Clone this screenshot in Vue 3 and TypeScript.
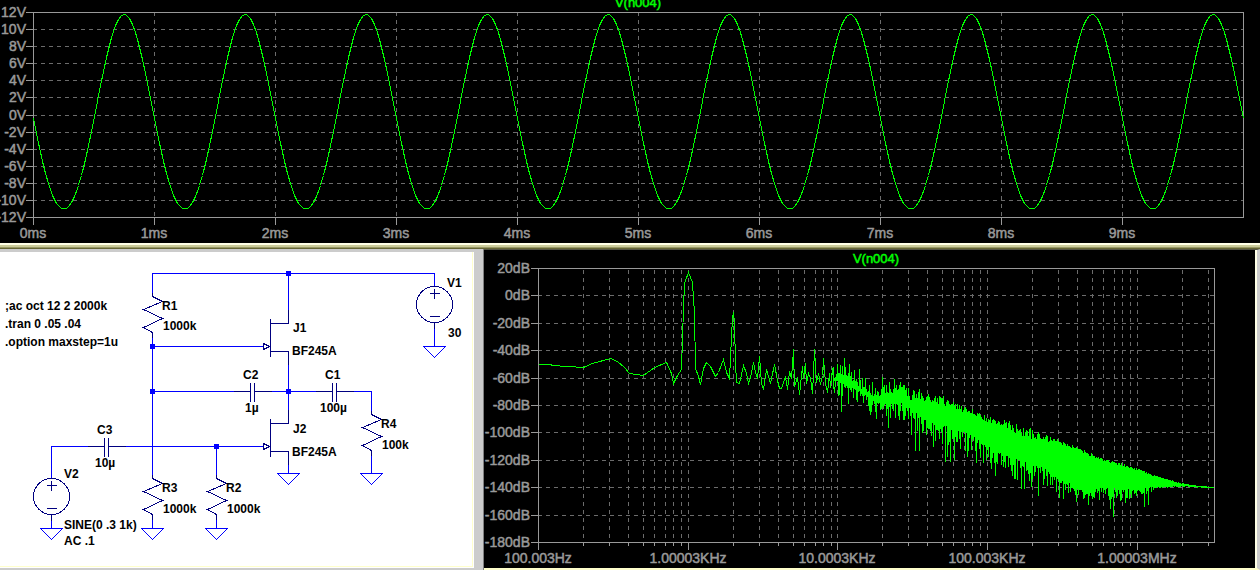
<script setup lang="ts">
interface Label { x: number; y: number; text: string }
type Point = [number, number]

// ---- Transient plot ----
const voltRows = [12, 29, 46, 63, 80, 97, 115, 132, 149, 166, 183, 200, 217]
  .map((y, i) => ({ y, text: `${12 - i * 2}V` }))
const msColumns = Array.from({ length: 10 }, (_, i) => ({ x: 33 + i * 121, text: `${i}ms` }))

const wave = Array.from({ length: 1211 }, (_, i) => {
  const w = (i / 121) * 2 * Math.PI
  const volts = -0.04 - 11.375 * Math.sin(w) - 0.41 * Math.cos(2 * w)
  return `${33 + i},${Math.round(114.5 - volts * 8.54)}`
}).join(' ')

// ---- Spectrum plot ----
const dbRows = [268, 295, 323, 350, 378, 405, 432, 460, 487, 515, 542]
  .map((y, i) => ({ y, text: `${20 - i * 20}dB` }))
const decades: { x: number; text: string }[] = [
  { x: 538, text: '100.003Hz' },
  { x: 688, text: '1.00003KHz' },
  { x: 837, text: '10.0003KHz' },
  { x: 987, text: '100.003KHz' },
  { x: 1137, text: '1.00003MHz' },
]
const minorColumns: number[] = []
for (const d of decades) {
  for (let n = 2; n < 10; n++) {
    const x = Math.round(d.x + 149.7 * Math.log10(n))
    if (x < 1212) minorColumns.push(x)
  }
}

const spectrumLine: Point[] = [
  [538, 364], [551, 364], [551, 365], [568, 366], [583, 367], [592, 363], [610, 358], [617, 361],
  [624, 367], [629, 373], [643, 375], [654, 367], [666, 362], [671, 373], [673, 383], [677, 375],
  [681, 369], [683, 307], [684, 283], [688, 272], [692, 282], [694, 313], [695, 368], [698, 376],
  [700, 384], [703, 368], [706, 362], [710, 366], [715, 376], [718, 372], [723, 359], [726, 372],
  [729, 378], [731, 337], [732, 317], [733, 312], [734, 323], [735, 363], [736, 382], [739, 383],
  [743, 365], [746, 373], [748, 383], [750, 377], [753, 362], [755, 372], [757, 378], [759, 356],
  [761, 383], [763, 389], [766, 369], [770, 383], [774, 364], [777, 380], [779, 388], [781, 388],
  [785, 376], [787, 389], [789, 371], [791, 378], [793, 349], [794, 386], [797, 377], [799, 394],
  [802, 366], [803, 378], [805, 363], [806, 383], [808, 373], [810, 378], [812, 393], [813, 373],
  [814, 349], [816, 382], [818, 373], [820, 384], [822, 375], [823, 358], [825, 383], [827, 392],
  [829, 373], [830, 387], [832, 368], [834, 393],
]
const spectrumPoints = spectrumLine.map(p => p.join(',')).join(' ')

// x, highest top, lowest top, highest bottom, lowest bottom of the noise band
const envelope: number[][] = [
  [833, 366, 380, 378, 396], [843, 362, 376, 383, 398], [860, 372, 388, 391, 404],
  [872, 384, 396, 399, 414], [880, 386, 398, 404, 420], [888, 382, 394, 404, 422],
  [896, 380, 392, 401, 418], [905, 386, 398, 404, 422], [915, 391, 402, 412, 430],
  [925, 392, 401, 420, 436], [940, 396, 405, 422, 444], [950, 400, 409, 426, 450],
  [970, 407, 414, 434, 454], [990, 417, 424, 448, 468], [1003, 418, 426, 453, 473],
  [1020, 426, 438, 460, 482], [1045, 434, 442, 468, 487], [1060, 440, 444, 480, 494],
  [1080, 448, 453, 487, 499], [1100, 456, 460, 487, 500], [1120, 463, 466, 488, 502],
  [1137, 468, 471, 490, 497], [1150, 474, 475, 487, 493], [1160, 477, 478, 487, 488],
  [1182, 483, 484, 486, 487], [1200, 486, 486, 487, 488], [1214, 487, 487, 488, 488],
]
const dips: Record<number, number> = {
  841: 412, 848: 404, 870: 415, 876: 419, 888: 428, 899: 420, 911: 435, 915: 451, 919: 451,
  933: 447, 945: 462, 947: 457, 950: 462, 954: 460, 967: 457, 976: 463, 983: 463, 991: 469,
  995: 476, 1014: 479, 1021: 489, 1024: 489, 1031: 487, 1038: 496, 1059: 498, 1063: 499,
  1076: 502, 1088: 505, 1099: 500, 1110: 509, 1113: 517, 1125: 503, 1144: 507, 1148: 505,
}
const peaks: Record<number, number> = {
  837: 364, 840: 365, 844: 358, 849: 364, 854: 370, 859: 369, 872: 382, 882: 377, 889: 382,
  894: 379, 900: 382, 913: 390, 919: 389, 935: 396, 943: 396, 953: 402, 1012: 425, 1030: 428,
}

let seed = 4711
function random(): number {
  seed = (seed * 16807) % 2147483647
  return seed / 2147483647
}
function bandAt(x: number): number[] {
  const i = Math.max(1, envelope.findIndex(e => e[0] >= x))
  const a = envelope[i - 1]
  const b = envelope[i]
  const t = (x - a[0]) / (b[0] - a[0])
  return a.map((v, k) => v + (b[k] - v) * t)
}
let noise = ''
for (let x = 833; x < 1214; x++) {
  const [, t0, t1, b0, b1] = bandAt(x)
  const sparse = x < 900 && x % 3 === 0
  const topRandom = sparse ? 0.7 + 0.3 * random() : random()
  const bottomRandom = sparse ? 0.2 * random() : Math.pow(random(), 1.2)
  const top = peaks[x] ?? Math.round(t0 + (t1 - t0) * topRandom)
  const bottom = dips[x] ?? Math.round(b0 + (b1 - b0) * bottomRandom)
  noise += `M${x + 0.5} ${Math.min(top, bottom - 1)}V${Math.max(bottom, top + 1)}`
}

// ---- Schematic ----
const resistor = (x: number, y: number) =>
  `M${x} ${y - 4}V${y}L${x + 10} ${y + 5}L${x - 9} ${y + 13}L${x + 10} ${y + 22}L${x - 9} ${y + 31}L${x} ${y + 36}V${y + 41}`
const ground = (x: number, y: number) => `M${x - 11} ${y}H${x + 11}L${x} ${y + 11}Z`
const capacitor = (x: number, y: number) =>
  `M${x - 17} ${y}H${x}M${x} ${y - 9}V${y + 10}M${x + 4} ${y - 9}V${y + 10}M${x + 4} ${y}H${x + 21}`
const jfet = (x: number, y: number) =>
  `M${x + 18} ${y - 37}V${y - 23}H${x}M${x} ${y - 28}V${y + 10}M${x} ${y + 5}H${x + 18}V${y + 18}M${x - 7} ${y - 3}V${y + 3}L${x - 1} ${y}Z`
const source = (x: number, y: number) =>
  `M${x - 5} ${y - 11}H${x + 5}M${x} ${y - 16}V${y - 6}M${x - 5} ${y + 12}H${x + 5}M${x} ${y + 18}V${y + 24}`

const wires = [
  'M152 292V273H434V286', 'M152 336V475', 'M152 346H263', 'M288 273V310', 'M288 364V410',
  'M152 391H234', 'M271 391H316', 'M353 391H371V411', 'M371 455V473', 'M288 464V473',
  'M51 478V446H88', 'M125 446H263', 'M216 446V475', 'M434 328V346', 'M51 520V528',
  'M152 519V528', 'M216 519V528',
].join('')
const grounds = [
  ground(434, 346), ground(371, 473), ground(288, 473), ground(51, 528), ground(152, 528), ground(216, 528),
].join('')
const parts = [
  resistor(152, 296), resistor(152, 478), resistor(216, 478), resistor(371, 414),
  capacitor(250, 391), capacitor(332, 391), capacitor(104, 446),
  jfet(270, 346), jfet(270, 446), source(434, 304), source(51, 496),
].join('')
const sources: Point[] = [[434, 304], [51, 496]]
const nodes: Point[] = [[288, 273], [152, 346], [152, 391], [288, 391], [216, 446]]
const labels: Label[] = [
  { x: 5, y: 310, text: ';ac oct 12 2 2000k' },
  { x: 5, y: 328, text: '.tran 0 .05 .04' },
  { x: 5, y: 346, text: '.option maxstep=1u' },
  { x: 162, y: 310, text: 'R1' }, { x: 163, y: 330, text: '1000k' },
  { x: 293, y: 332, text: 'J1' }, { x: 292, y: 355, text: 'BF245A' },
  { x: 447, y: 287, text: 'V1' }, { x: 448, y: 337, text: '30' },
  { x: 243, y: 379, text: 'C2' }, { x: 245, y: 412, text: '1µ' },
  { x: 325, y: 379, text: 'C1' }, { x: 320, y: 412, text: '100µ' },
  { x: 381, y: 428, text: 'R4' }, { x: 382, y: 449, text: '100k' },
  { x: 293, y: 433, text: 'J2' }, { x: 292, y: 456, text: 'BF245A' },
  { x: 97, y: 434, text: 'C3' }, { x: 95, y: 467, text: '10µ' },
  { x: 64, y: 478, text: 'V2' }, { x: 64, y: 529, text: 'SINE(0 .3 1k)' }, { x: 64, y: 545, text: 'AC .1' },
  { x: 162, y: 492, text: 'R3' }, { x: 163, y: 513, text: '1000k' },
  { x: 226, y: 492, text: 'R2' }, { x: 227, y: 513, text: '1000k' },
]
</script>

<template>
  <main class="workspace">
    <section class="transient">
      <svg class="plot" viewBox="0 0 1260 243" role="img" aria-label="V(n004) over time">
        <g class="grid">
          <path v-for="r in voltRows.slice(1, -1)" :key="r.y" :d="`M33 ${r.y + 0.5}H1243`" />
          <path v-for="c in msColumns.slice(1)" :key="c.x" :d="`M${c.x + 0.5} 12V217`" />
        </g>
        <g class="axis">
          <rect x="33.5" y="12.5" width="1210" height="205" />
          <path v-for="r in voltRows" :key="r.y" :d="`M26 ${r.y + 0.5}H33`" />
          <path v-for="c in msColumns" :key="c.x" :d="`M${c.x + 0.5} 217V225`" />
        </g>
        <polyline class="trace" :points="wave" transform="translate(0.5 0.5)" />
        <g class="scale">
          <text v-for="r in voltRows" :key="r.y" class="end" x="26" :y="r.y + 5">{{ r.text }}</text>
          <text v-for="c in msColumns" :key="c.x" class="mid" :x="c.x" y="238">{{ c.text }}</text>
        </g>
        <text class="title mid" x="638" y="7">V(n004)</text>
      </svg>
    </section>

    <div class="splitter"></div>

    <div class="lower">
      <section class="schematic">
        <div class="sheet">
          <svg class="plot" viewBox="0 252 472 314" role="img" aria-label="Amplifier schematic">
            <g transform="translate(0.5 0.5)">
              <path class="wire" :d="wires" />
              <path class="wire" :d="grounds" />
              <path class="part" :d="parts" />
              <circle v-for="s in sources" :key="s[0]" class="part" :cx="s[0]" :cy="s[1]" r="18" />
            </g>
            <rect v-for="n in nodes" :key="n.join()" class="node" :x="n[0] - 2" :y="n[1] - 2" width="5" height="5" />
            <text v-for="l in labels" :key="`${l.x}-${l.y}`" class="label" :x="l.x" :y="l.y">{{ l.text }}</text>
          </svg>
        </div>
      </section>

      <section class="spectrum">
        <svg class="plot" viewBox="484 250 771 318" role="img" aria-label="V(n004) spectrum">
          <g class="grid">
            <path v-for="r in dbRows.slice(1, -1)" :key="r.y" :d="`M538 ${r.y + 0.5}H1214`" />
            <path v-for="c in decades.slice(1)" :key="c.x" :d="`M${c.x + 0.5} 270V542`" />
            <path v-for="x in minorColumns" :key="x" :d="`M${x + 0.5} 270V542`" />
          </g>
          <g class="axis">
            <rect x="538.5" y="268.5" width="676" height="274" />
            <path v-for="r in dbRows" :key="r.y" :d="`M531 ${r.y + 0.5}H538`" />
            <path v-for="c in decades" :key="c.x" :d="`M${c.x + 0.5} 542V550`" />
            <path v-for="x in minorColumns" :key="x" :d="`M${x + 0.5} 542V546`" />
          </g>
          <polyline class="trace" :points="spectrumPoints" transform="translate(0.5 0.5)" />
          <path class="trace" :d="noise" />
          <g class="scale">
            <text v-for="r in dbRows" :key="r.y" class="end" x="530" :y="r.y + 5">{{ r.text }}</text>
            <text v-for="c in decades" :key="c.x" class="mid" :x="c.x" y="563">{{ c.text }}</text>
          </g>
          <text class="title mid" x="876" y="263">V(n004)</text>
        </svg>
      </section>
    </div>
  </main>
</template>

<style>
body {
  background: #000;
}
</style>

<style scoped>
.workspace {
  font-family: "Liberation Sans", Arial, sans-serif;
  background: #000;
}
.plot {
  display: block;
  width: 100%;
  height: auto;
  shape-rendering: crispEdges;
}
.transient {
  background: #000;
}
.splitter {
  height: 6px;
  background: linear-gradient(#ffffe6 0 2px, #cccc99 2px 4px, #999966 4px 5px, #666633 5px);
}
.lower {
  display: grid;
  grid-template-columns: 484fr 776fr;
}
.schematic {
  background: #cccccc;
  border-right: 1px solid #808080;
  padding-right: 9px;
}
.sheet {
  background: #fff;
  border-top: 3px solid #808080;
  border-image: linear-gradient(#cccccc 0 34%, #999 34% 67%, #666 67%) 3 0 0 0;
  box-shadow: inset -1px -1px #fff, inset -2px -2px #ffffcc;
  padding: 0 2px 2px 0;
}
.spectrum {
  background: #000;
  border-top: 1px solid #555544;
  border-bottom: 2px solid #ffffcc;
  border-right: 3px solid #cccccc;
  box-shadow: inset -2px 0 #ffffe6;
  padding-right: 2px;
}
.grid path {
  stroke: #6c6c6c;
  stroke-dasharray: 4 4;
  fill: none;
}
.axis path,
.axis rect {
  stroke: #999;
  fill: none;
}
.trace {
  stroke: #00ff00;
  fill: none;
}
.scale text {
  font-size: 14px;
  fill: #999;
  stroke: #999;
  stroke-width: 0.5px;
}
.title {
  font-size: 13px;
  fill: #00ff00;
  stroke: #00ff00;
  stroke-width: 0.5px;
}
.end {
  text-anchor: end;
}
.mid {
  text-anchor: middle;
}
.wire {
  stroke: #0000ff;
  fill: none;
}
.part {
  stroke: #000080;
  fill: none;
}
.node {
  fill: #0000ff;
}
.label {
  font-size: 12px;
  font-weight: bold;
  fill: #000;
}
</style>
